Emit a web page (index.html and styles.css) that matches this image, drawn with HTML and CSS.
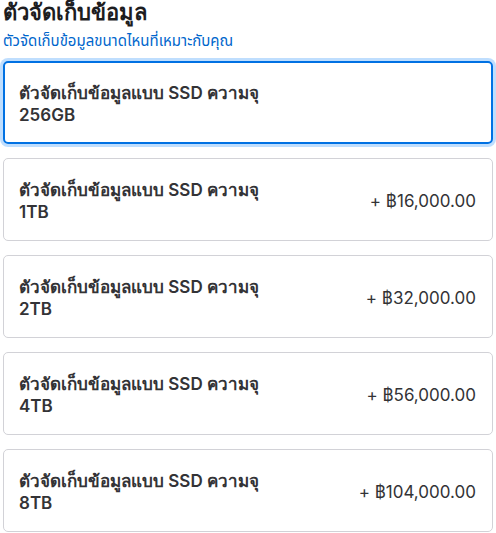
FILE: index.html
```html
<!DOCTYPE html>
<html lang="th">
<head>
    <meta charset="UTF-8">
    <meta name="viewport" content="width=device-width, initial-scale=1.0">
    <title>ตัวจัดเก็บข้อมูล</title>
    <link rel="stylesheet" href="styles.css">
</head>
<body>
    <div class="storage">
        <h2 class="storage-title">ตัวจัดเก็บข้อมูล</h2>
        <a class="storage-help" href="#">ตัวจัดเก็บข้อมูลขนาดไหนที่เหมาะกับคุณ</a>

        <div class="options">
            <label class="option selected">
                <span class="option-name">ตัวจัดเก็บข้อมูลแบบ SSD ความจุ<br>256GB</span>
            </label>
            <label class="option">
                <span class="option-name">ตัวจัดเก็บข้อมูลแบบ SSD ความจุ<br>1TB</span>
                <span class="option-price">+ ฿16,000.00</span>
            </label>
            <label class="option">
                <span class="option-name">ตัวจัดเก็บข้อมูลแบบ SSD ความจุ<br>2TB</span>
                <span class="option-price">+ ฿32,000.00</span>
            </label>
            <label class="option">
                <span class="option-name">ตัวจัดเก็บข้อมูลแบบ SSD ความจุ<br>4TB</span>
                <span class="option-price">+ ฿56,000.00</span>
            </label>
            <label class="option">
                <span class="option-name">ตัวจัดเก็บข้อมูลแบบ SSD ความจุ<br>8TB</span>
                <span class="option-price">+ ฿104,000.00</span>
            </label>
        </div>
    </div>
</body>
</html>
```

FILE: styles.css
```css
body {
    margin: 0;
    background: #ffffff;
    font-family: Inter, "Noto Sans", sans-serif;
    color: #1d1d1f;
}

.storage {
    padding: 0 3px;
}

.storage-title {
    margin: 0;
    font-size: 22px;
    font-weight: 700;
    line-height: 24px;
}

.storage-help {
    display: block;
    margin-top: 5px;
    font-family: "Noto Sans", "Noto Sans Thai", sans-serif;
    font-size: 15px;
    line-height: 22px;
    color: #0066cc;
    text-decoration: none;
}

.options {
    display: flex;
    flex-direction: column;
    gap: 14px;
    margin-top: 10px;
}

.option {
    display: flex;
    align-items: center;
    justify-content: space-between;
    height: 83px;
    box-sizing: border-box;
    padding: 3px 16px 0 15px;
    border: 1px solid #d2d2d7;
    border-radius: 5px;
    cursor: pointer;
}

.option.selected {
    border: 2px solid #0071e3;
    padding: 3px 15px 0 14px;
    box-shadow: 0 0 0 3px rgba(0, 125, 250, 0.25);
}

.option-name {
    font-size: 17px;
    font-weight: 600;
    line-height: 22px;
    color: #333336;
}

.option-price {
    font-size: 17px;
    line-height: 22px;
    color: #333336;
}
```
